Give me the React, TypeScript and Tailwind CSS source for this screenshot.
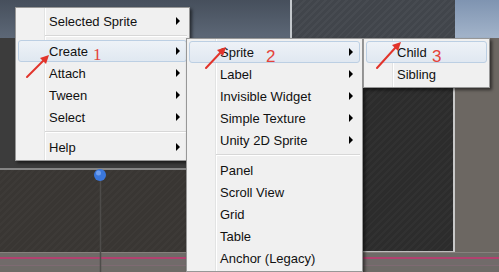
import React from "react";

type Item = { label: string; sub?: boolean; active?: boolean } | "sep";

const mainMenu: Item[] = [
	{ label: "Selected Sprite", sub: true },
	"sep",
	{ label: "Create", sub: true, active: true },
	{ label: "Attach", sub: true },
	{ label: "Tween", sub: true },
	{ label: "Select", sub: true },
	"sep",
	{ label: "Help", sub: true },
];

const createMenu: Item[] = [
	{ label: "Sprite", sub: true, active: true },
	{ label: "Label", sub: true },
	{ label: "Invisible Widget", sub: true },
	{ label: "Simple Texture", sub: true },
	{ label: "Unity 2D Sprite", sub: true },
	"sep",
	{ label: "Panel" },
	{ label: "Scroll View" },
	{ label: "Grid" },
	{ label: "Table" },
	{ label: "Anchor (Legacy)" },
];

const spriteMenu: Item[] = [{ label: "Child", active: true }, { label: "Sibling" }];

function MenuRows({ items }: { items: Item[] }) {
	return (
		<>
			{items.map((it, i) =>
				it === "sep" ? (
					<div key={i} className="h-[8px] flex flex-col justify-center ml-[29px] mr-[2px]">
						<div className="h-px bg-[#d7d7d7]" />
						<div className="h-px bg-white" />
					</div>
				) : (
					<div
						key={i}
						className={
							it.active
								? "mx-[2px] h-[22px] flex items-center pl-[30px] pr-[6px] border border-[#bccfe3] rounded-[3px] bg-gradient-to-b from-[#eef2f7] to-[#e0e8f1]"
								: "mx-[2px] h-[22px] flex items-center pl-[30px] pr-[6px] border border-transparent"
						}
					>
						<span className="text-[13px] leading-none text-[#111]">{it.label}</span>
						{it.sub && <span className="ml-auto w-0 h-0 border-y-[4px] border-y-transparent border-l-[4px] border-l-black" />}
					</div>
				)
			)}
		</>
	);
}

const menuShell =
	"absolute py-[2px] border border-[#979797] bg-[linear-gradient(90deg,#f1f1f1_0,#f1f1f1_28px,#e2e3e3_28px,#e2e3e3_29px,#ffffff_29px,#ffffff_30px,#f0f0f0_30px)] shadow-[2px_2px_3px_rgba(0,0,0,0.55)]";

export default function App() {
	return (
		<div className="relative w-[499px] h-[272px] overflow-hidden font-['Liberation_Sans',Arial,sans-serif]">
			{/* scene behind the menus */}
			<div className="flex flex-col h-full">
				<div className="flex h-[38px]">
					<div className="w-[290px] bg-gradient-to-b from-[#464f5c] to-[#5d6877]" />
					<div className="w-[2px] bg-[#c4c8cc]" />
					<div className="w-[163px] bg-[repeating-linear-gradient(135deg,#41454b_0px,#41454b_3px,#474b51_3px,#474b51_5px)]" />
					<div className="flex-1 bg-gradient-to-b from-[#7f94b1] to-[#a3b4ca]" />
				</div>
				<div className="flex h-[214px]">
					<div className="w-[360px] flex flex-col">
						<div className="h-[130px] bg-[#3c3c3c]" />
						<div className="h-[2px] bg-[#858585]" />
						<div className="flex-1 bg-[repeating-linear-gradient(135deg,#393633_0px,#393633_3px,#3d3a37_3px,#3d3a37_5px)]" />
					</div>
					<div className="w-[93px] border-b border-[#bdbdbd] bg-[repeating-linear-gradient(135deg,#2c2c2c_0px,#2c2c2c_3px,#313131_3px,#313131_5px)]" />
					<div className="w-[2px] bg-[#c8c8c8]" />
					<div className="flex-1 bg-[#6c6762]" />
				</div>
				<div className="flex flex-col flex-1 bg-[#6e6a67]">
					<div className="h-px bg-[#86817d]" />
					<div className="h-[4px]" />
					<div className="h-[2px] bg-[#b2416f]" />
					<div className="h-[6px] bg-[#716b6a]" />
					<div className="h-px bg-[#7e6a72]" />
				</div>
			</div>

			{/* gizmo */}
			<svg className="absolute inset-0" width="499" height="272">
				<line x1="100.5" y1="175" x2="100.5" y2="272" stroke="#4e4c4a" strokeWidth="1.5" />
				<circle cx="100" cy="175" r="6" fill="#3a77dc" />
				<circle cx="98.5" cy="173" r="2.5" fill="#6f9ff0" />
			</svg>

			{/* context menus */}
			<div className={`${menuShell} left-[15px] top-[7px] w-[175px]`}>
				<MenuRows items={mainMenu} />
			</div>
			<div className={`${menuShell} left-[186px] top-[38px] w-[177px]`}>
				<MenuRows items={createMenu} />
			</div>
			<div className={`${menuShell} left-[363px] top-[38px] w-[127px]`}>
				<MenuRows items={spriteMenu} />
			</div>

			{/* annotations */}
			<svg className="absolute inset-0" width="499" height="272">
				<g stroke="#e2342b" strokeWidth="2" strokeLinecap="round">
					<line x1="27" y1="77" x2="44" y2="60" />
					<line x1="206" y1="68" x2="221" y2="52" />
					<line x1="377" y1="68" x2="396" y2="47" />
				</g>
				<g fill="#e2342b">
					<polygon points="49,55 40,58 46,64" />
					<polygon points="226,47 217,50 223,56" />
					<polygon points="401,42 392,45 398,51" />
				</g>
			</svg>
			<span className="absolute left-[93px] top-[46px] text-[17px] leading-none text-[#e4423a] font-['Liberation_Serif',serif]">1</span>
			<span className="absolute left-[266px] top-[48px] text-[17px] leading-none text-[#e4423a] font-['Liberation_Sans',sans-serif]">2</span>
			<span className="absolute left-[432px] top-[48px] text-[17px] leading-none text-[#e4423a] font-['Liberation_Sans',sans-serif]">3</span>
		</div>
	);
}
